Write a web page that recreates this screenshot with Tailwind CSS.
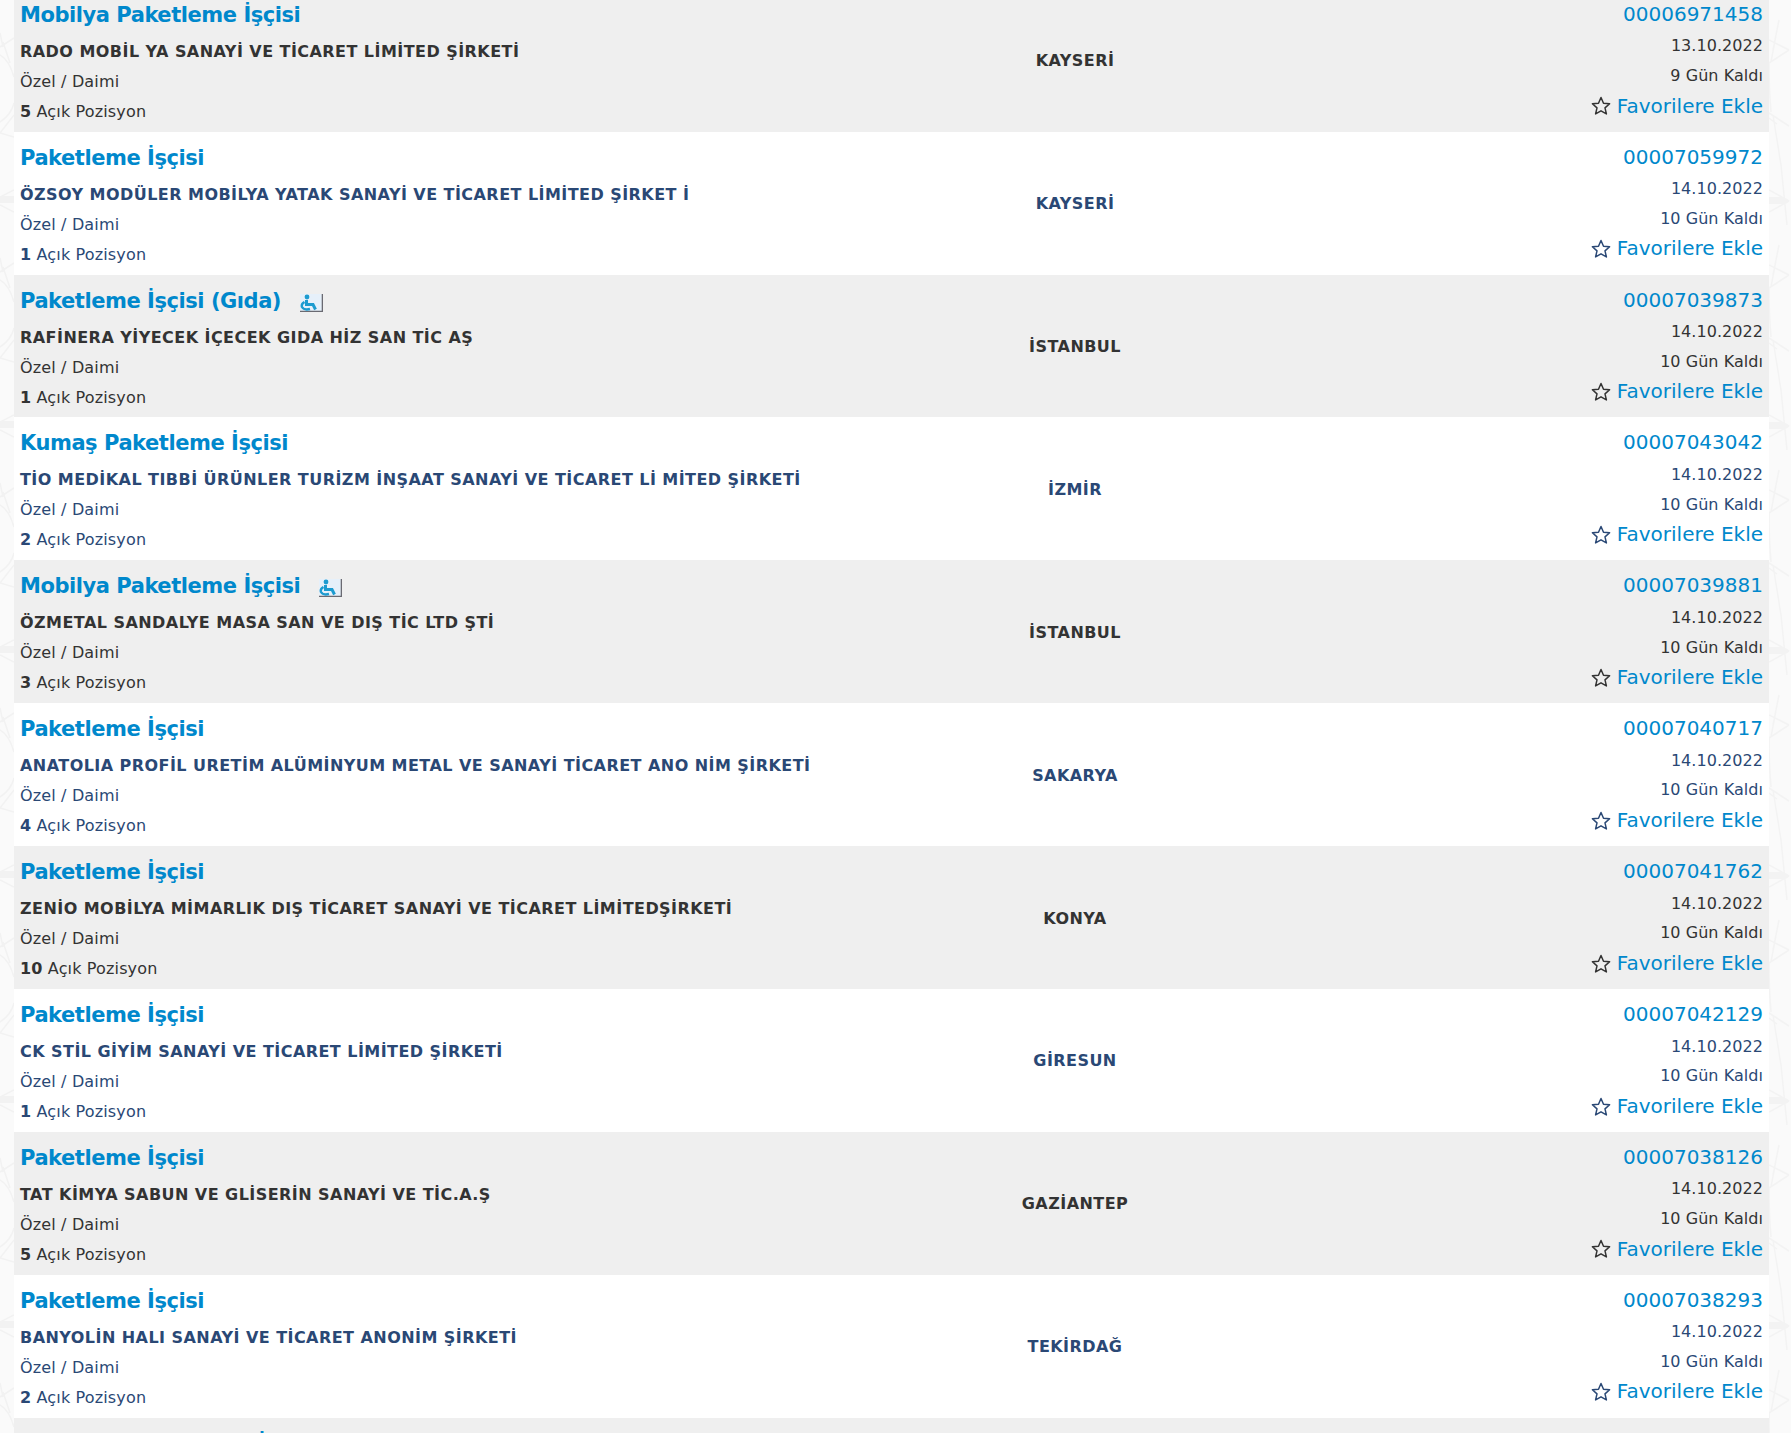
<!DOCTYPE html>
<html lang="tr">
<head>
    <meta charset="UTF-8">
    <title>İş İlanları</title>
    <script src="https://cdn.jsdelivr.net/npm/@tailwindcss/browser@4"></script>
</head>
<body class="bg-[#fafafa] h-screen overflow-hidden font-['DejaVu_Sans',sans-serif]">
    <!-- faint branch pattern behind the list -->
    <svg class="fixed inset-0 w-full h-full" xmlns="http://www.w3.org/2000/svg">
        <defs>
            <pattern id="leftTile" x="0" y="0" width="14" height="225" patternUnits="userSpaceOnUse">
                <g fill="none" stroke="#f2f2f2" stroke-width="1.5">
                    <path d="M0 33L3 47M14 38L0 47M3 42L10 63M0 55Q9 60 14 77M14 103Q11 115 0 122M14 115L0 133M0 133L14 137"/>
                    <path d="M14 190L0 197M14 212L0 205"/>
                </g>
                <rect x="0" y="196" width="14" height="7" fill="#f2f2f2"/>
            </pattern>
            <pattern id="rightTile" x="1769" y="0" width="22" height="225" patternUnits="userSpaceOnUse">
                <g fill="none" stroke="#f3f3f3" stroke-width="1.5">
                    <path d="M10 20L7 35L4 50M0 40L20 50M0 63L20 50M7 35L2 62M0 62Q0 90 2 112M0 113L20 126M4 115L12 165L18 225M0 118L8 124"/>
                    <path d="M0 190L20 201M0 212L20 201"/>
                </g>
                <path d="M0 197L14 197L20 201L14 204L0 204Z" fill="#f3f3f3"/>
            </pattern>
        </defs>
        <rect x="0" y="0" width="14" height="1433" fill="url(#leftTile)"/>
        <rect x="1769" y="0" width="22" height="1433" fill="url(#rightTile)"/>
    </svg>

    <div id="list" class="relative mx-[14px] w-[1755px] -mt-[11.2px]"></div>

    <script>
        const jobs = [
            ['Mobilya Paketleme İşçisi', 0, 'RADO MOBİL YA SANAYİ VE TİCARET LİMİTED ŞİRKETİ', 5, 'KAYSERİ', '00006971458', '13.10.2022', '9 Gün Kaldı'],
            ['Paketleme İşçisi', 0, 'ÖZSOY MODÜLER MOBİLYA YATAK SANAYİ VE TİCARET LİMİTED ŞİRKET İ', 1, 'KAYSERİ', '00007059972', '14.10.2022', '10 Gün Kaldı'],
            ['Paketleme İşçisi (Gıda)', 1, 'RAFİNERA YİYECEK İÇECEK GIDA HİZ SAN TİC AŞ', 1, 'İSTANBUL', '00007039873', '14.10.2022', '10 Gün Kaldı'],
            ['Kumaş Paketleme İşçisi', 0, 'TİO MEDİKAL TIBBİ ÜRÜNLER TURİZM İNŞAAT SANAYİ VE TİCARET Lİ MİTED ŞİRKETİ', 2, 'İZMİR', '00007043042', '14.10.2022', '10 Gün Kaldı'],
            ['Mobilya Paketleme İşçisi', 1, 'ÖZMETAL SANDALYE MASA SAN VE DIŞ TİC LTD ŞTİ', 3, 'İSTANBUL', '00007039881', '14.10.2022', '10 Gün Kaldı'],
            ['Paketleme İşçisi', 0, 'ANATOLIA PROFİL URETİM ALÜMİNYUM METAL VE SANAYİ TİCARET ANO NİM ŞİRKETİ', 4, 'SAKARYA', '00007040717', '14.10.2022', '10 Gün Kaldı'],
            ['Paketleme İşçisi', 0, 'ZENİO MOBİLYA MİMARLIK DIŞ TİCARET SANAYİ VE TİCARET LİMİTEDŞİRKETİ', 10, 'KONYA', '00007041762', '14.10.2022', '10 Gün Kaldı'],
            ['Paketleme İşçisi', 0, 'CK STİL GİYİM SANAYİ VE TİCARET LİMİTED ŞİRKETİ', 1, 'GİRESUN', '00007042129', '14.10.2022', '10 Gün Kaldı'],
            ['Paketleme İşçisi', 0, 'TAT KİMYA SABUN VE GLİSERİN SANAYİ VE TİC.A.Ş', 5, 'GAZİANTEP', '00007038126', '14.10.2022', '10 Gün Kaldı'],
            ['Paketleme İşçisi', 0, 'BANYOLİN HALI SANAYİ VE TİCARET ANONİM ŞİRKETİ', 2, 'TEKİRDAĞ', '00007038293', '14.10.2022', '10 Gün Kaldı']
        ];

        const wheelchair = `
            <svg class="ml-[19px] mt-[11px] shrink-0" width="23" height="18" viewBox="0 0 23 18" xmlns="http://www.w3.org/2000/svg">
                <rect width="23" height="18" fill="#e6f0fa"/>
                <path d="M22.4 0V17.4H0" fill="none" stroke="#6a6a72" stroke-width="1.4"/>
                <circle cx="7" cy="3" r="2.4" fill="#1c9bd0"/>
                <path d="M6.5 6V10.5H13L15.5 15.5" fill="none" stroke="#1c9bd0" stroke-width="3"/>
                <path d="M4.5 8Q1 10 2 13Q4 16.5 10 15" fill="none" stroke="#1c9bd0" stroke-width="2.4"/>
            </svg>`;

        const star = `
            <svg class="mr-[6px] shrink-0" width="20" height="19" viewBox="0 0 20 19" xmlns="http://www.w3.org/2000/svg">
                <path d="M10 1.5L12.5 7.2L18.6 7.8L14 11.9L15.4 17.9L10 14.8L4.6 17.9L6 11.9L1.4 7.8L7.5 7.2Z" fill="none" stroke="currentColor" stroke-width="1.5" stroke-linejoin="round"/>
            </svg>`;

        const rows = jobs.map((job, i) => {
            const [title, disabled, company, count, city, id, date, left] = job;
            const rowClass = i % 2 === 0 ? 'bg-[#efefef] text-[#333333]' : 'bg-white text-[#2a4875]';
            return `
            <div class="grid grid-cols-[861px_400px_494px] h-[142.89px] ${rowClass}">
                <div class="pl-[6px] pt-[8px]">
                    <div class="flex items-start h-[36px]">
                        <a class="text-[#0088cc] font-bold text-[21px] tracking-[-0.45px] leading-[36px]">${title}</a>
                        ${disabled ? wheelchair : ''}
                    </div>
                    <div class="mt-[4px] font-bold text-[16px] tracking-[0.45px] leading-[30px] whitespace-nowrap">${company}</div>
                    <div class="text-[16px] tracking-[0.15px] leading-[30px]">Özel / Daimi</div>
                    <div class="text-[16px] tracking-[0.15px] leading-[30px]"><b>${count}</b> Açık Pozisyon</div>
                </div>
                <div class="flex items-center justify-center font-bold text-[16px] tracking-[0.45px] pt-[2px]">${city}</div>
                <div class="flex flex-col items-end pr-[6px] pt-[10px] text-[16px] tracking-[0.05px] leading-[30.6px]">
                    <a class="text-[#0088cc] text-[20px] tracking-normal">${id}</a>
                    <div class="mt-[2px]">${date}</div>
                    <div class="-mt-[1px]">${left}</div>
                    <div class="flex items-center -mt-[1px]">${star}<a class="text-[#0088cc] text-[20px] tracking-normal">Favorilere Ekle</a></div>
                </div>
            </div>`;
        }).join('');

        // next row is only just scrolled into view, its title's top edge shows
        const nextRow = `
            <div class="h-[142.89px] bg-[#efefef] pl-[6px] pt-[8px]">
                <a class="block text-[#0088cc] font-bold text-[21px] tracking-[-0.45px] leading-[36px]">Ayakkabı Paketleme İşçisi</a>
            </div>`;

        document.getElementById('list').innerHTML = rows + nextRow;
    </script>
</body>
</html>
